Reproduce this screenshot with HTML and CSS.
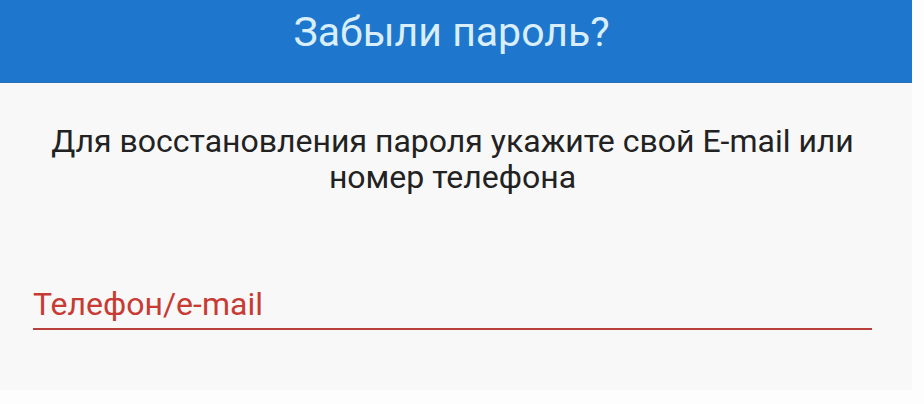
FILE: index.html
```html
<!DOCTYPE html>
<html lang="ru">
<head>
<meta charset="utf-8">
<link rel="stylesheet" href="styles.css">
</head>
<body>
<div class="card">
  <header class="head">
    <h1 class="title">Забыли пароль?</h1>
  </header>
  <div class="body">
    <p class="lead">Для восстановления пароля укажите свой E-mail или номер телефона</p>
    <div class="field">
      <span class="label">Телефон/e-mail</span>
    </div>
  </div>
</div>
</body>
</html>
```
FILE: styles.css
```css
html, body {
  margin: 0;
  padding: 0;
  background: #fdfdfd;
  font-family: Roboto, "Noto Sans", sans-serif;
}
.card {
  width: 912px;
  height: 390px;
  background: #f8f8f8;
  display: flex;
  flex-direction: column;
}
.head {
  height: 83px;
  background: #1f77cd;
  display: flex;
  justify-content: center;
  border-bottom: 1px solid #2a6fb5;
  box-sizing: border-box;
}
.title {
  margin: 0 9px 0 0;
  padding-top: 10px;
  font-weight: 400;
  font-size: 41px;
  line-height: 44px;
  color: #d9eefb;
}
.body {
  padding: 0 40px 0 33px;
}
.lead {
  margin: 40px 0 0 0;
  text-align: center;
  font-size: 32px;
  line-height: 36px;
  color: #222222;
}
.field {
  margin-top: 93px;
  width: 839px;
  border-bottom: 2px solid #b9403a;
  padding-bottom: 8px;
}
.label {
  display: block;
  font-size: 32px;
  line-height: 32px;
  color: #c73b34;
}
```
